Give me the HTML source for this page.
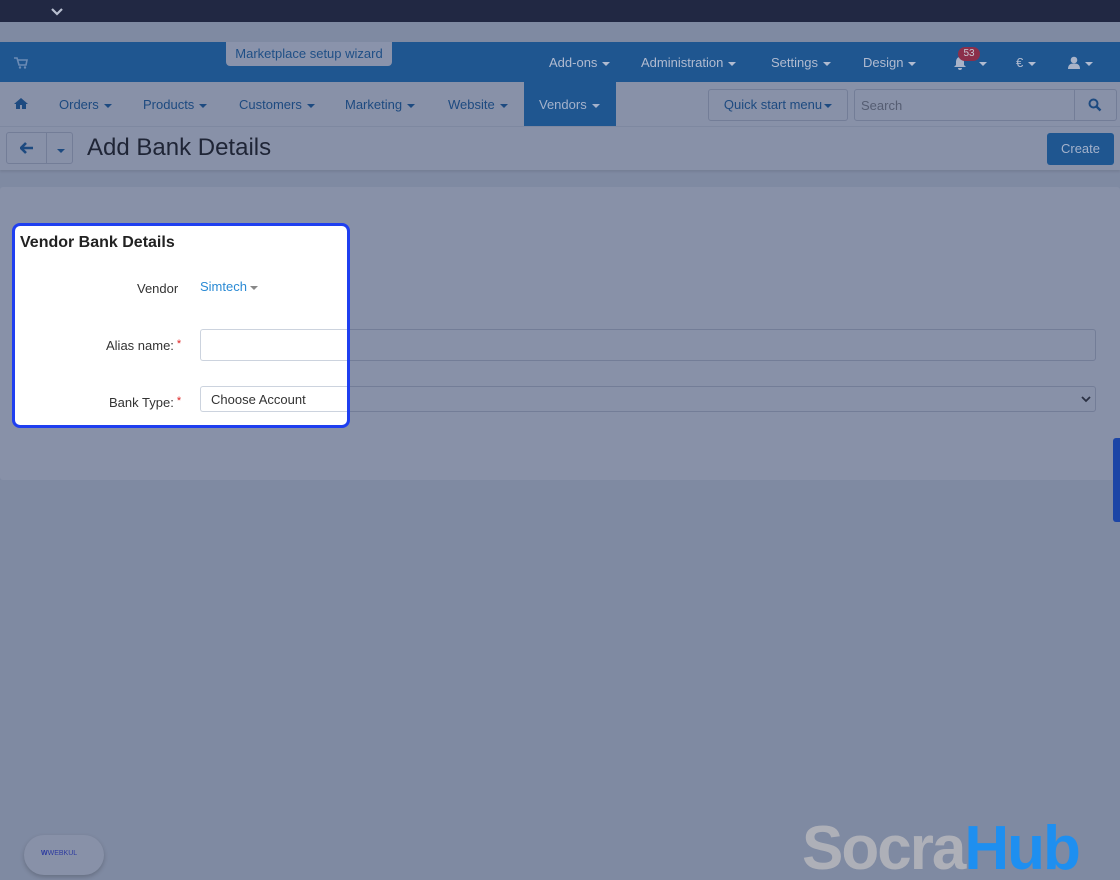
<!DOCTYPE html>
<html><head><meta charset="utf-8"><style>
*{box-sizing:border-box;margin:0;padding:0}
html,body{width:1120px;height:880px;overflow:hidden}
body{background:#7f8aa2;font-family:"Liberation Sans",sans-serif;position:relative;color:#2a3042}
.abs{position:absolute}
.top{left:0;top:0;width:1120px;height:22px;background:#212843}
.blue{left:0;top:42px;width:1120px;height:40px;background:#1f5690}
.nav{left:0;top:82px;width:1120px;height:45px;background:#8891a8;border-bottom:1px solid #7e88a0}
.hdr{left:0;top:127px;width:1120px;height:43px;background:#8891a8;box-shadow:0 2px 2px rgba(0,0,0,.08)}
.card{left:0;top:187px;width:1120px;height:293px;background:#8891a8;border-radius:3px}
.nt{font-size:13px;color:#1d4a80;top:97px}
.tb{font-size:13px;color:#b1bbd0;top:55px}
.car{display:inline-block;width:0;height:0;border-left:4px solid transparent;border-right:4px solid transparent;border-top:4px solid currentColor;vertical-align:middle;margin-left:5px}
</style></head><body>
<div class="abs top"></div>
<svg class="abs" style="left:51px;top:7px" width="12" height="9"><path d="M1 2l5 5 5-5" stroke="#b8bfd0" stroke-width="2.2" fill="none"/></svg>
<div class="abs blue"></div>
<svg class="abs" style="left:14px;top:57px" width="14" height="12"><path d="M0 1h3l2 7h7l1-5H4" stroke="#6b8bb5" stroke-width="1.6" fill="none"/><circle cx="6" cy="10.5" r="1.2" fill="#6b8bb5"/><circle cx="11" cy="10.5" r="1.2" fill="#6b8bb5"/></svg>
<div class="abs" style="left:226px;top:42px;width:166px;height:24px;background:#8a93ab;border-radius:0 0 4px 4px;font-size:13px;color:#1f4f86;text-align:center;line-height:23px">Marketplace setup wizard</div>
<div class="abs tb" style="left:549px">Add-ons<span class="car"></span></div>
<div class="abs tb" style="left:641px">Administration<span class="car"></span></div>
<div class="abs tb" style="left:771px">Settings<span class="car"></span></div>
<div class="abs tb" style="left:863px">Design<span class="car"></span></div>
<svg class="abs" style="left:953px;top:56px" width="14" height="14"><path d="M7 1c-3 0-4 3-4 5v3l-2 2h12l-2-2V6c0-2-1-5-4-5zM5 12a2 2 0 004 0" fill="#a9b3c8"/></svg>
<div class="abs" style="left:958px;top:47px;width:22px;height:14px;background:#8b2f4a;border-radius:7px;color:#c9cbd6;font-size:10px;text-align:center;line-height:14px">53</div>
<div class="abs tb" style="left:974px;color:#b1bbd0"><span class="car"></span></div>
<div class="abs tb" style="left:1016px">€<span class="car"></span></div>
<svg class="abs" style="left:1068px;top:56px" width="14" height="13"><circle cx="6" cy="4" r="3.3" fill="#a9b3c8"/><path d="M0 13c0-4 2-5.5 6-5.5s6 1.5 6 5.5z" fill="#a9b3c8"/></svg>
<div class="abs tb" style="left:1080px"><span class="car"></span></div>
<div class="abs nav"></div>
<svg class="abs" style="left:14px;top:97px" width="14" height="12"><path d="M7 1L0 7h2v5h4V8h2v4h4V7h2z" fill="#1d4a80"/></svg>
<div class="abs nt" style="left:59px">Orders<span class="car"></span></div>
<div class="abs nt" style="left:143px">Products<span class="car"></span></div>
<div class="abs nt" style="left:239px">Customers<span class="car"></span></div>
<div class="abs nt" style="left:345px">Marketing<span class="car"></span></div>
<div class="abs nt" style="left:448px">Website<span class="car"></span></div>
<div class="abs" style="left:524px;top:82px;width:92px;height:44px;background:#1f5690"></div>
<div class="abs nt" style="left:539px;color:#a4b2cb">Vendors<span class="car"></span></div>
<div class="abs" style="left:708px;top:89px;width:140px;height:32px;border:1px solid #737d97;border-radius:3px;font-size:13px;color:#1d4a80;line-height:30px;text-align:center">Quick start menu<span class="car" style="margin-left:2px"></span></div>
<div class="abs" style="left:854px;top:89px;width:263px;height:32px;border:1px solid #737d97;border-radius:3px"></div>
<div class="abs" style="left:1074px;top:89px;width:1px;height:32px;background:#737d97"></div>
<div class="abs" style="left:861px;top:98px;font-size:13px;color:#555d72">Search</div>
<svg class="abs" style="left:1088px;top:98px" width="14" height="14"><circle cx="5.5" cy="5.5" r="4" stroke="#1d4a80" stroke-width="2" fill="none"/><path d="M8.5 8.5l4 4" stroke="#1d4a80" stroke-width="2.4"/></svg>
<div class="abs hdr"></div>
<div class="abs" style="left:6px;top:132px;width:67px;height:32px;border:1px solid #737d97;border-radius:3px"></div>
<div class="abs" style="left:46px;top:132px;width:1px;height:32px;background:#737d97"></div>
<svg class="abs" style="left:20px;top:142px" width="14" height="12"><path d="M6 1L1 6l5 5M1 6h12" stroke="#1d4a80" stroke-width="2.6" fill="none"/></svg>
<div class="abs" style="left:52px;top:143px;color:#1d4a80;font-size:12px"><span class="car"></span></div>
<div class="abs" style="left:87px;top:134px;font-size:24px;color:#1f2536">Add Bank Details</div>
<div class="abs" style="left:1047px;top:133px;width:67px;height:32px;background:#1f5690;border-radius:3px;color:#a4b2cb;font-size:13px;text-align:center;line-height:32px">Create</div>
<div class="abs card"></div>
<div class="abs" style="left:200px;top:329px;width:896px;height:32px;border:1px solid #737d97;border-radius:3px"></div>
<div class="abs" style="left:200px;top:386px;width:896px;height:26px;border:1px solid #737d97;border-radius:3px"></div>
<svg class="abs" style="left:1081px;top:395px" width="10" height="8"><path d="M1 2l4 4 4-4" stroke="#2a3042" stroke-width="1.8" fill="none"/></svg>
<div class="abs" style="left:1113px;top:438px;width:7px;height:84px;background:#1c45a6;border-radius:3px 0 0 3px"></div>
<div class="abs" style="left:12px;top:223px;width:338px;height:205px;background:#fff;border:3px solid #1f3ff0;border-radius:8px"></div>
<div class="abs" style="left:20px;top:234px;font-size:16px;font-weight:bold;color:#222">Vendor Bank Details</div>
<div class="abs" style="left:137px;top:281px;font-size:13px;color:#333">Vendor</div>
<div class="abs" style="left:200px;top:279px;font-size:13px;color:#2a8ad4">Simtech<span class="car" style="color:#888;margin-left:3px"></span></div>
<div class="abs" style="left:106px;top:338px;font-size:13px;color:#333">Alias name:<span style="color:#d22;font-size:11px;vertical-align:top;margin-left:3px">*</span></div>
<div class="abs" style="left:109px;top:395px;font-size:13px;color:#333">Bank Type:<span style="color:#d22;font-size:11px;vertical-align:top;margin-left:3px">*</span></div>
<div class="abs" style="left:200px;top:329px;width:147px;height:32px;border:1px solid #ccd3de;border-right:none;border-radius:3px 0 0 3px"></div>
<div class="abs" style="left:200px;top:386px;width:147px;height:26px;border:1px solid #ccd3de;border-right:none;border-radius:3px 0 0 3px"></div>
<div class="abs" style="left:211px;top:392px;font-size:13px;color:#333">Choose Account</div>
<div class="abs" style="left:24px;top:835px;width:80px;height:40px;background:#8891a8;border-radius:20px;box-shadow:0 2px 5px rgba(0,0,0,.2)"></div>
<div class="abs" style="left:41px;top:850px;font-size:7px;color:#2c3aa0;font-weight:bold">W<span style="font-weight:normal">WEBKUL</span></div>
<div class="abs" style="left:802px;top:812px;font-size:62px;font-weight:bold;letter-spacing:-2px;color:#aeb0b8;line-height:74px;white-space:nowrap">Socra<span style="color:#1e8ff0">Hub</span></div>
</body></html>
